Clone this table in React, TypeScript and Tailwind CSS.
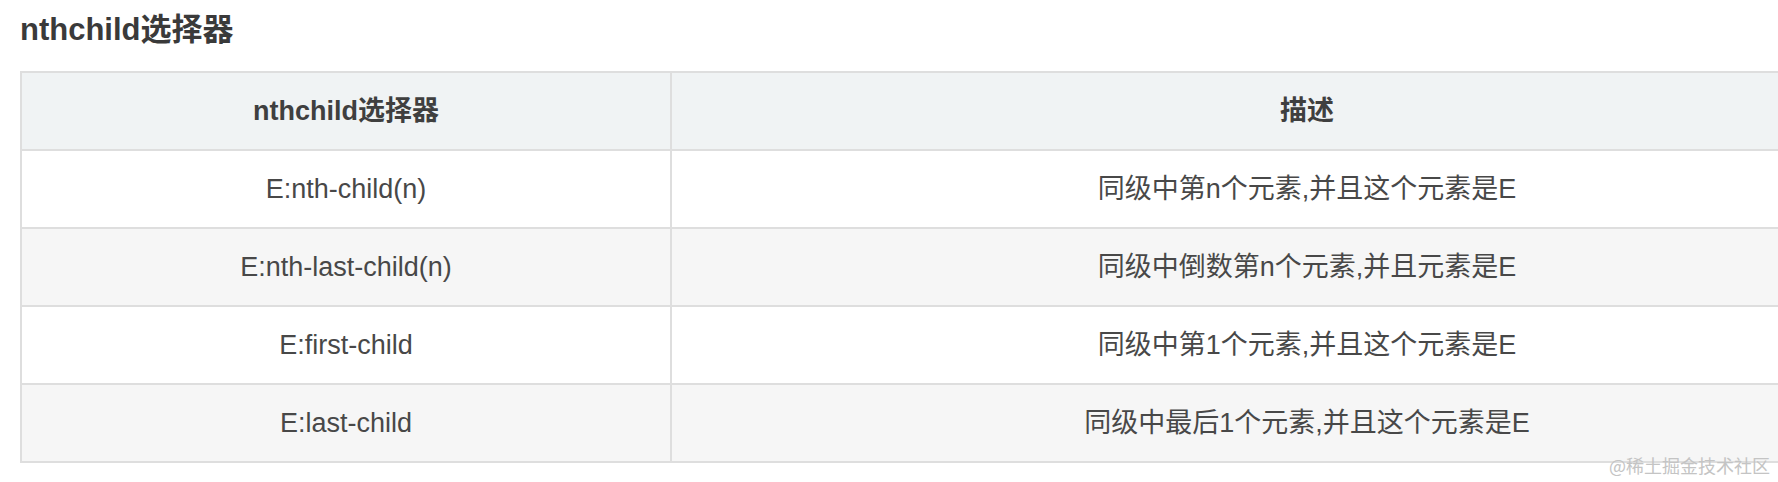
const ROWS: Array<{ sel: string; desc: string }> = [
  { sel: "E:nth-child(n)",      desc: "同级中第n个元素,并且这个元素是E" },
  { sel: "E:nth-last-child(n)", desc: "同级中倒数第n个元素,并且元素是E" },
  { sel: "E:first-child",       desc: "同级中第1个元素,并且这个元素是E" },
  { sel: "E:last-child",        desc: "同级中最后1个元素,并且这个元素是E" },
];

const FONT = "font-['Liberation_Sans','Noto_Sans_CJK_SC',sans-serif]";

export default function App() {
  return (
    <div className={`relative w-full h-[482px] overflow-hidden bg-white text-[#444] ${FONT}`}>
      <div className="pl-[20px] pt-[10px]">
        <h2 className="text-[31px] leading-[40px] font-bold text-[#3a3a3a]">nthchild选择器</h2>
        <table className="mt-[21px] border-collapse table-fixed w-[1922px] text-[27px]">
          <colgroup>
            <col className="w-[650px]" />
            <col className="w-[1272px]" />
          </colgroup>
          <thead>
            <tr className="bg-[#f0f3f4]">
              <th className="h-[78px] border-2 border-[#dedede] font-bold text-center text-[#3f3f3f]">nthchild选择器</th>
              <th className="h-[78px] border-2 border-[#dedede] font-bold text-center text-[#3f3f3f]">描述</th>
            </tr>
          </thead>
          <tbody>
            {ROWS.map((r, i) => (
              <tr key={r.sel} className={i % 2 === 1 ? "bg-[#f6f6f6]" : "bg-white"}>
                <td className="h-[78px] border-2 border-[#dedede] text-center text-[#484848]">{r.sel}</td>
                <td className="h-[78px] border-2 border-[#dedede] text-center text-[#484848]">{r.desc}</td>
              </tr>
            ))}
          </tbody>
        </table>
      </div>
      <div className="absolute right-[8px] top-[454px] text-[18px] leading-[22px] text-[#c4c4c4] font-['Noto_Sans_CJK_SC',sans-serif]">
        @稀土掘金技术社区
      </div>
    </div>
  );
}
